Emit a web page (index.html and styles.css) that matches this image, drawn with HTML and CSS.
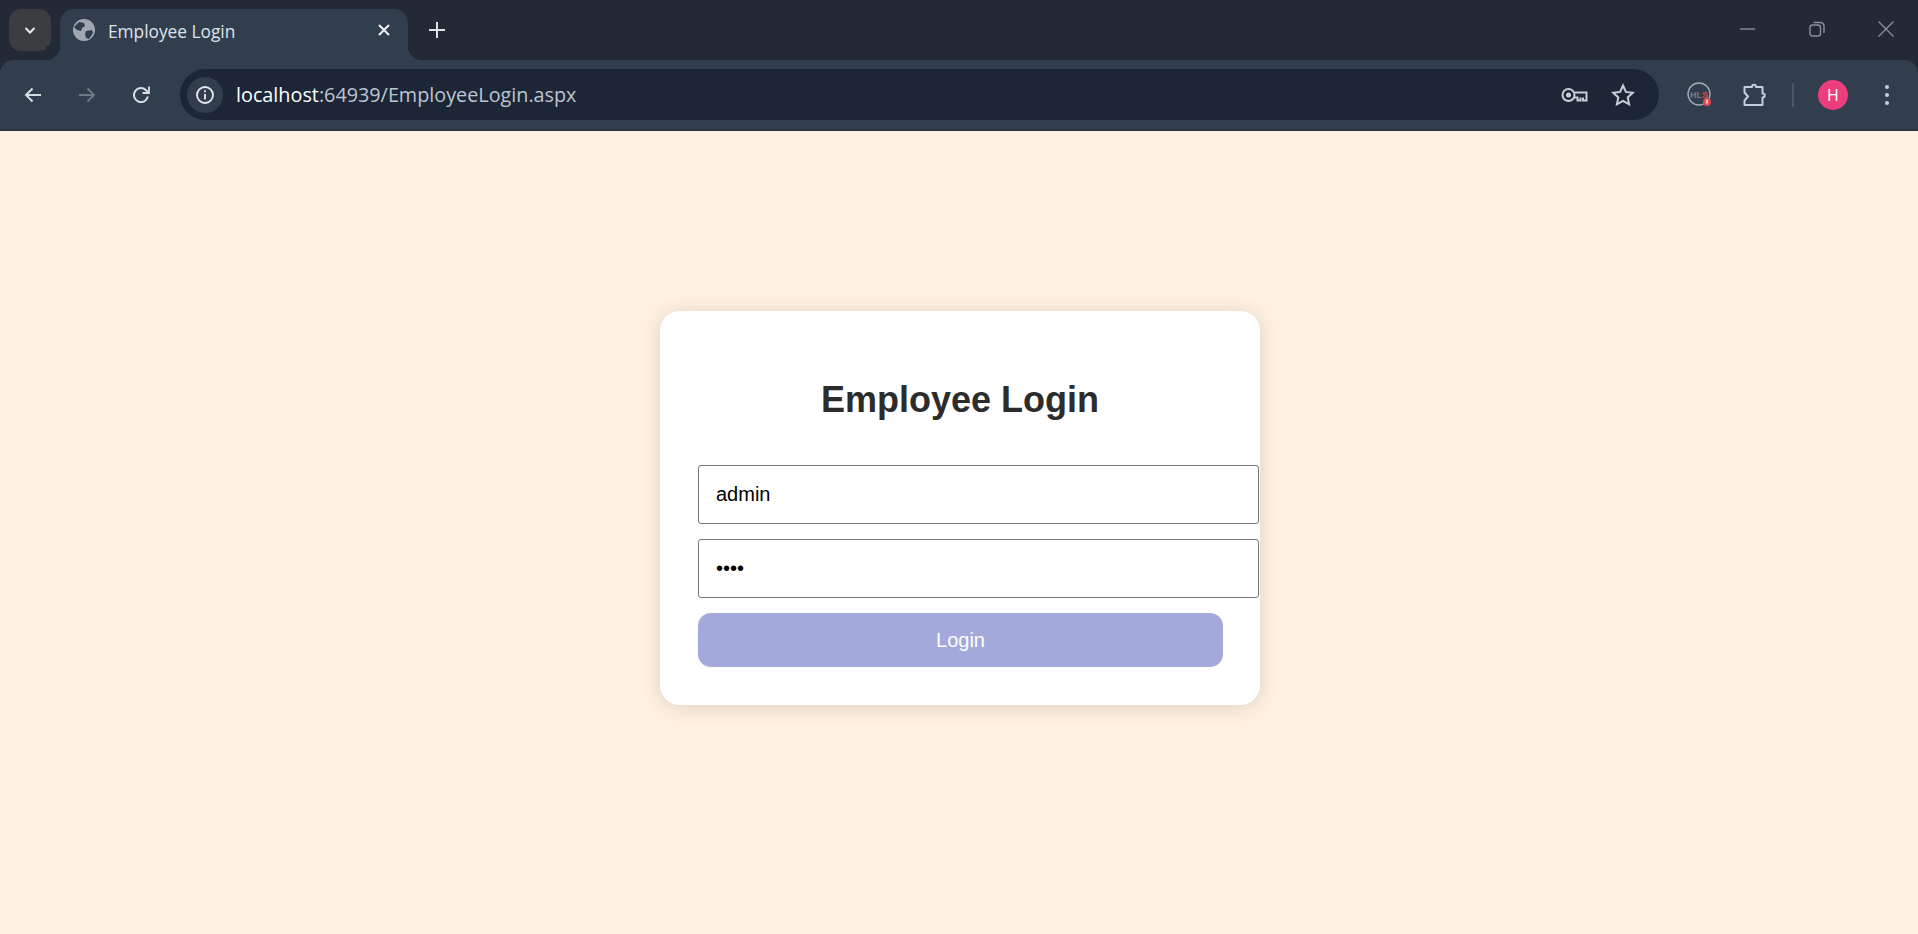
FILE: index.html
```html
<!DOCTYPE html>
<html lang="en">
<head>
    <meta charset="UTF-8">
    <meta name="viewport" content="width=device-width, initial-scale=1.0">
    <title>Employee Login</title>
    <link rel="stylesheet" href="styles.css">
</head>
<body>

    <div class="browser-chrome">
        <!-- Tab strip -->
        <div class="tabstrip">
            <div class="tab-search">
                <svg width="14" height="14" viewBox="0 0 14 14"><path d="M2.5 5l4.5 4.5L11.5 5" fill="none" stroke="#e6e8ec" stroke-width="2"/></svg>
            </div>
            <div class="tab">
                <svg class="favicon" width="22" height="22" viewBox="0 0 22 22">
                    <circle cx="11" cy="11" r="11" fill="#a2a8b1"/>
                    <path d="M6 3l5 1 1 3-3 2-1 3-4-1-3-3zM13 12l6-1 1 3-4 6-3-1-1-4z" fill="#323e4e"/>
                </svg>
                <span class="tab-title">Employee Login</span>
                <svg class="tab-close" width="14" height="14" viewBox="0 0 14 14"><path d="M2 2l10 10M12 2L2 12" stroke="#f0f2f5" stroke-width="2"/></svg>
            </div>
            <svg class="new-tab" width="16" height="16" viewBox="0 0 16 16"><path d="M8 0v16M0 8h16" stroke="#dfe3e9" stroke-width="2"/></svg>
            <div class="window-controls">
                <svg width="16" height="16" viewBox="0 0 16 16"><path d="M0 8h15" stroke="#8b9098" stroke-width="1.4"/></svg>
                <svg width="16" height="16" viewBox="0 0 16 16" fill="none" stroke="#8b9098" stroke-width="1.4"><rect x="1" y="4" width="10.5" height="11" rx="2.5"/><path d="M4.5 1.5h7a3.5 3.5 0 0 1 3.5 3.5v7"/></svg>
                <svg width="16" height="16" viewBox="0 0 16 16"><path d="M.5.5l15 15M15.500.5l-15 15" stroke="#8b9098" stroke-width="1.4"/></svg>
            </div>
        </div>

        <!-- Toolbar with address bar -->
        <div class="toolbar">
            <div class="nav-buttons">
                <svg width="20" height="20" viewBox="0 0 20 20" fill="none" stroke="#d8dde4" stroke-width="2"><path d="M18 10H3M9.500 3.500L3 10l6.500 6.500"/></svg>
                <svg width="20" height="20" viewBox="0 0 20 20" fill="none" stroke="#6f7885" stroke-width="2"><path d="M2 10h15M10.500 3.500L17 10l-6.500 6.500"/></svg>
                <svg width="20" height="20" viewBox="0 0 20 20" fill="none" stroke="#d8dde4" stroke-width="2"><path d="M16.800 11.500A7 7 0 1 1 15 5.200L17.500 7.500"/><path d="M18 1.500V8h-6.500" stroke-width="1.800"/></svg>
            </div>
            <div class="omnibox">
                <div class="site-info">
                    <svg width="20" height="20" viewBox="0 0 20 20" fill="none" stroke="#e8ebef" stroke-width="1.800"><circle cx="10" cy="10" r="8"/><path d="M10 9v5.500M10 5.200v2"/></svg>
                </div>
                <div class="url"><span class="url-host">localhost</span>:64939/EmployeeLogin.aspx</div>
                <svg class="omni-key" width="28" height="16" viewBox="0 0 28 16" fill="none" stroke="#c9ced6" stroke-width="2"><circle cx="7.500" cy="8" r="6"/><circle cx="7.500" cy="8" r="2.500" fill="#c9ced6" stroke="none"/><path d="M13.500 5.500h12v8h-3.500V10.500M19.500 10.500v3h-3V10.500h-3"/></svg>
                <svg class="omni-star" width="24" height="24" viewBox="0 0 24 24" fill="none" stroke="#c9ced6" stroke-width="2"><path d="M12 2.500l2.900 6.400 6.900.8-5.100 4.700 1.400 6.900-6.100-3.500-6.100 3.500 1.400-6.900-5.100-4.700 6.900-.8z"/></svg>
            </div>
            <div class="hls-icon">
                <svg width="26" height="26" viewBox="0 0 26 26">
                    <circle cx="12" cy="12" r="11" fill="none" stroke="#a9adb3" stroke-width="1.300"/>
                    <text x="12" y="15.500" text-anchor="middle" class="hls-text">HL<tspan fill="#e5484d">S</tspan></text>
                    <circle cx="20" cy="20" r="4" fill="#e5484d"/>
                    <path d="M20 17.500v4" stroke="#fff" stroke-width="1.400"/>
                </svg>
            </div>
            <svg class="puzzle-icon" width="26" height="26" viewBox="0 0 26 26" fill="none" stroke="#c3cde0" stroke-width="2" stroke-linejoin="round"><path d="M2.500 5H10c0-3 4-3 4 0h6.500v6.500c3 0 3 4 0 4V23h-18v-4.500l3.500-4-3.500-4z"/></svg>
            <div class="toolbar-sep"></div>
            <div class="avatar">H</div>
            <div class="menu-dots"><span></span><span></span><span></span></div>
        </div>
    </div>

    <!-- Page content -->
    <div class="page">
        <form class="login-card">
            <h2>Employee Login</h2>
            <input class="login-input" type="text" value="admin">
            <input class="login-input" type="password" value="1234">
            <button class="login-button" type="button">Login</button>
        </form>
    </div>

</body>
</html>
```

FILE: styles.css
```css
* {
    margin: 0;
    padding: 0;
    box-sizing: border-box;
}

html, body {
    height: 100%;
}

body {
    display: flex;
    flex-direction: column;
    overflow: hidden;
    font-family: 'Liberation Sans', Arial, sans-serif;
    background-color: #fff1e0;
}

.browser-chrome {
    background-color: #232a36;
}

/* Tab strip */
.tabstrip {
    display: flex;
    align-items: flex-end;
    height: 60px;
    padding-left: 9px;
}

.tab-search {
    display: flex;
    align-items: center;
    justify-content: center;
    width: 42px;
    height: 42px;
    margin-right: 9px;
    margin-bottom: 9px;
    border-radius: 12px;
    background-color: #3c3d41;
}

.tab {
    position: relative;
    display: flex;
    align-items: center;
    width: 348px;
    height: 51px;
    padding: 0 17px 9px 13px;
    border-radius: 14px 14px 0 0;
    background-color: #323e4e;
}

.tab::before,
.tab::after {
    content: "";
    position: absolute;
    bottom: 0;
    width: 14px;
    height: 14px;
}

.tab::before {
    left: -14px;
    background: radial-gradient(circle at 0 0, #232a36 14px, #323e4e 14.500px);
}

.tab::after {
    right: -14px;
    background: radial-gradient(circle at 100% 0, #232a36 14px, #323e4e 14.500px);
}

.tab-title {
    flex: 1;
    margin-left: 13px;
    margin-top: 2px;
    font-family: 'Open Sans', sans-serif;
    font-size: 17.300px;
    color: #dfe3e9;
}

.new-tab {
    margin-left: 21px;
    margin-bottom: 22px;
}

.window-controls {
    display: flex;
    gap: 53px;
    margin-left: auto;
    margin-right: 24px;
    margin-bottom: 23px;
}

/* Toolbar */
.toolbar {
    display: flex;
    align-items: center;
    height: 71px;
    padding-left: 23px;
    border-bottom: 2px solid #2b3542;
    border-radius: 14px 14px 0 0;
    background-color: #323e4e;
}

.nav-buttons {
    display: flex;
    gap: 34px;
}

.omnibox {
    display: flex;
    align-items: center;
    width: 1479px;
    height: 51px;
    margin-left: 29px;
    padding-left: 7px;
    border-radius: 26px;
    background-color: #1c2636;
}

.site-info {
    display: flex;
    align-items: center;
    justify-content: center;
    width: 36px;
    height: 36px;
    border-radius: 50%;
    background-color: #323e4e;
}

.url {
    flex: 1;
    margin-left: 13px;
    font-family: 'Open Sans', sans-serif;
    font-size: 19.800px;
    color: #bcc5d2;
}

.url-host {
    color: #fff;
}

.omni-key {
    margin-right: 22px;
}

.omni-star {
    margin-right: 24px;
}

.hls-icon {
    display: flex;
    margin-left: 28px;
}

.hls-text {
    font-family: 'Liberation Sans', sans-serif;
    font-size: 9px;
    font-weight: bold;
    fill: #777b81;
}

.puzzle-icon {
    margin-left: 29px;
}

.toolbar-sep {
    width: 2px;
    height: 24px;
    margin-left: 24px;
    background-color: #4a5667;
}

.avatar {
    display: flex;
    align-items: center;
    justify-content: center;
    width: 30px;
    height: 30px;
    margin-left: 24px;
    border-radius: 50%;
    background-color: #ec3d7c;
    font-family: 'Open Sans', sans-serif;
    font-size: 16px;
    color: #fff;
}

.menu-dots {
    display: flex;
    flex-direction: column;
    gap: 4px;
    margin-left: 37px;
}

.menu-dots span {
    width: 4px;
    height: 4px;
    border-radius: 50%;
    background-color: #c3cde0;
}

/* Login card */
.page {
    flex: 1;
    display: flex;
    justify-content: center;
    align-items: flex-start;
    padding: 180px 0 0 2px;
}

.login-card {
    width: 600px;
    height: 394px;
    padding: 38px;
    border-radius: 20px;
    background-color: #fff;
    box-shadow: 0 2px 20px rgba(0, 0, 0, 0.13);
}

.login-card h2 {
    margin-top: 30px;
    margin-bottom: 44px;
    text-align: center;
    font-size: 36px;
    font-weight: bold;
    color: #2c2c2c;
}

.login-input {
    display: block;
    width: 561px;
    height: 59px;
    margin-bottom: 15px;
    padding: 0 17px;
    border: 1px solid #767676;
    border-radius: 3px;
    font-family: 'Liberation Sans', Arial, sans-serif;
    font-size: 20px;
    color: #000;
    outline: none;
}

.login-button {
    display: block;
    width: 525px;
    height: 54px;
    border: none;
    border-radius: 13px;
    background-color: #a3aadb;
    font-family: 'Liberation Sans', Arial, sans-serif;
    font-size: 20px;
    color: #fff;
}
```
